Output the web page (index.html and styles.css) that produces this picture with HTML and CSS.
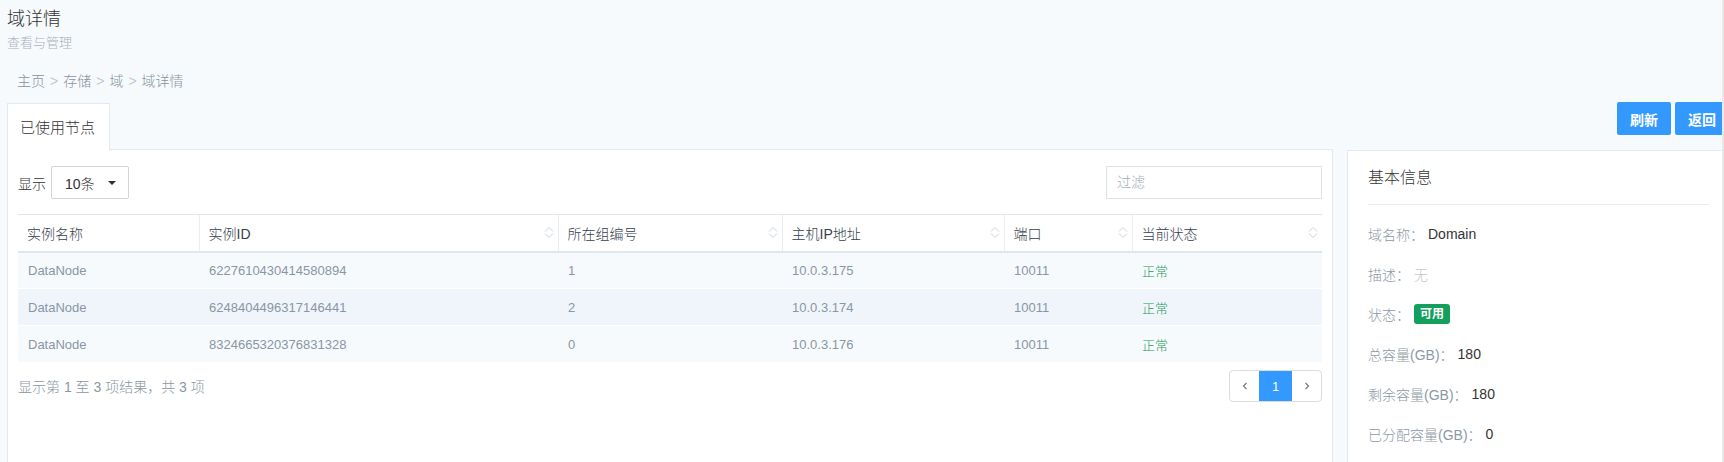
FILE: index.html
```html
<!DOCTYPE html>
<html lang="zh-CN">
<head>
<meta charset="utf-8">
<title>域详情</title>
<link rel="stylesheet" href="styles.css">
</head>
<body>
<div class="viewport">
  <div class="page">
    <header class="page-head">
      <h1 class="title">域详情</h1>
      <div class="subtitle">查看与管理</div>
    </header>
    <nav class="crumbs">
      <span>主页</span><span class="sep">&gt;</span><span>存储</span><span class="sep">&gt;</span><span>域</span><span class="sep">&gt;</span><span>域详情</span>
    </nav>
    <div class="main">
      <section class="left">
        <div class="tabbar">
          <div class="tab">已使用节点</div>
          <div class="tab-fill"></div>
        </div>
        <div class="panel">
          <div class="toolbar">
            <div class="length">
              <span class="length-label">显示</span>
              <div class="select"><span>10条</span><span class="caret"></span></div>
            </div>
            <div class="filter">过滤</div>
          </div>
          <table class="grid">
            <colgroup>
              <col class="c1"><col class="c2"><col class="c3"><col class="c4"><col class="c5"><col class="c6">
            </colgroup>
            <thead>
              <tr>
                <th>实例名称</th>
                <th><div class="th-in"><span>实例ID</span><svg class="sort" viewBox="0 0 10 13" width="10" height="13"><polyline points="1,5.5 5,1.5 9,5.5"/><polyline points="1,7.5 5,11.5 9,7.5"/></svg></div></th>
                <th><div class="th-in"><span>所在组编号</span><svg class="sort" viewBox="0 0 10 13" width="10" height="13"><polyline points="1,5.5 5,1.5 9,5.5"/><polyline points="1,7.5 5,11.5 9,7.5"/></svg></div></th>
                <th><div class="th-in"><span>主机IP地址</span><svg class="sort" viewBox="0 0 10 13" width="10" height="13"><polyline points="1,5.5 5,1.5 9,5.5"/><polyline points="1,7.5 5,11.5 9,7.5"/></svg></div></th>
                <th><div class="th-in"><span>端口</span><svg class="sort" viewBox="0 0 10 13" width="10" height="13"><polyline points="1,5.5 5,1.5 9,5.5"/><polyline points="1,7.5 5,11.5 9,7.5"/></svg></div></th>
                <th><div class="th-in"><span>当前状态</span><svg class="sort" viewBox="0 0 10 13" width="10" height="13"><polyline points="1,5.5 5,1.5 9,5.5"/><polyline points="1,7.5 5,11.5 9,7.5"/></svg></div></th>
              </tr>
            </thead>
            <tbody>
              <tr class="odd">
                <td>DataNode</td><td>6227610430414580894</td><td>1</td><td>10.0.3.175</td><td>10011</td><td class="ok">正常</td>
              </tr>
              <tr class="even">
                <td>DataNode</td><td>6248404496317146441</td><td>2</td><td>10.0.3.174</td><td>10011</td><td class="ok">正常</td>
              </tr>
              <tr class="odd">
                <td>DataNode</td><td>8324665320376831328</td><td>0</td><td>10.0.3.176</td><td>10011</td><td class="ok">正常</td>
              </tr>
            </tbody>
          </table>
          <div class="table-foot">
            <div class="info-text">显示第 1 至 3 项结果，共 3 项</div>
            <div class="pager">
              <span class="pg pg-arrow"><svg viewBox="0 0 6 8" width="6" height="8"><polyline points="4.5,0.8 1.5,4 4.5,7.2"/></svg></span>
              <span class="pg pg-active">1</span>
              <span class="pg pg-arrow"><svg viewBox="0 0 6 8" width="6" height="8"><polyline points="1.5,0.8 4.5,4 1.5,7.2"/></svg></span>
            </div>
          </div>
        </div>
      </section>
      <aside class="right">
        <div class="actions">
          <button class="btn">刷新</button>
          <button class="btn">返回</button>
        </div>
        <div class="card">
          <div class="card-title">基本信息</div>
          <dl class="props">
            <div class="prop"><dt>域名称：</dt><dd>Domain</dd></div>
            <div class="prop"><dt>描述：</dt><dd class="muted">无</dd></div>
            <div class="prop"><dt>状态：</dt><dd><span class="badge">可用</span></dd></div>
            <div class="prop"><dt>总容量(GB)：</dt><dd>180</dd></div>
            <div class="prop"><dt>剩余容量(GB)：</dt><dd>180</dd></div>
            <div class="prop"><dt>已分配容量(GB)：</dt><dd>0</dd></div>
          </dl>
        </div>
      </aside>
    </div>
  </div>
  <div class="edge"></div>
</div>
</body>
</html>
```
FILE: styles.css
```css
* { box-sizing: border-box; }
html, body {
  margin: 0;
  padding: 0;
  height: 462px;
  overflow: hidden;
  background: #f7fafd;
}
body {
  font-family: "Liberation Sans", Arial, "Noto Sans CJK SC", sans-serif;
  font-size: 14px;
  font-weight: 300;
  color: #333;
}
.viewport {
  display: flex;
  width: 1724px;
  height: 462px;
  overflow: hidden;
}
.page {
  width: 1722px;
  flex: none;
  overflow: hidden;
  padding: 8px 0 0 7px;
}
.edge {
  width: 2px;
  flex: none;
  background: #e9e9e9;
}
.title {
  margin: 0;
  font-size: 18px;
  font-weight: 300;
  line-height: 22px;
  color: #333;
}
.subtitle {
  font-size: 13px;
  line-height: 26px;
  color: #a9b2bc;
}
.crumbs {
  margin-top: 15px;
  padding-left: 10px;
  font-size: 14px;
  line-height: 20px;
  color: #8892a0;
}
.crumbs .sep {
  padding: 0 5px;
  color: #c3c8cf;
}
.main {
  display: grid;
  grid-template-columns: 1326px 382px;
  column-gap: 14px;
  margin-top: 12px;
}
.tabbar {
  display: flex;
  height: 47px;
}
.tab {
  width: 103px;
  border: 1px solid #e3e9f0;
  border-bottom: none;
  background: #fff;
  padding: 14px 0 0 12px;
  font-size: 15px;
  line-height: 20px;
  color: #333;
}
.tab-fill {
  flex: 1;
  border-bottom: 1px solid #e3e9f0;
}
.panel {
  background: #fff;
  border: 1px solid #e3e9f0;
  border-top: none;
  padding: 16px 10px 0 10px;
  height: 330px;
}
.toolbar {
  display: flex;
  justify-content: space-between;
  align-items: center;
  height: 33px;
}
.length {
  display: flex;
  align-items: center;
}
.length-label {
  font-size: 14px;
  color: #333;
  margin-right: 5px;
}
.select {
  width: 78px;
  height: 33px;
  border: 1px solid #cfd4da;
  border-radius: 2px;
  display: flex;
  align-items: center;
  justify-content: space-between;
  padding: 0 12px 0 13px;
  font-size: 14px;
  color: #333;
}
.caret {
  width: 0;
  height: 0;
  border-left: 4px solid transparent;
  border-right: 4px solid transparent;
  border-top: 4px solid #333;
}
.filter {
  width: 216px;
  height: 33px;
  border: 1px solid #dde3ea;
  padding-left: 10px;
  line-height: 31px;
  font-size: 14px;
  color: #a8aeb5;
}
.grid {
  width: 100%;
  margin-top: 15px;
  border-collapse: collapse;
  table-layout: fixed;
  font-size: 13px;
}
.c1 { width: 181px; }
.c2 { width: 359px; }
.c3 { width: 224px; }
.c4 { width: 222px; }
.c5 { width: 128px; }
.grid th {
  height: 37px;
  padding: 0 4px 0 9px;
  text-align: left;
  font-weight: 300;
  font-size: 14px;
  color: #34404c;
  border-top: 1px solid #dfe6ee;
  border-bottom: 2px solid #dfe6ee;
  border-left: 1px solid #e8eef5;
  background: #fff;
}
.grid th:first-child { border-left: none; }
.th-in {
  display: flex;
  align-items: center;
  justify-content: space-between;
}
.sort {
  fill: none;
  stroke: #cdd2d8;
  stroke-width: 1;
}
.grid td {
  height: 37px;
  padding: 0 10px;
  color: #8a96a4;
  border-bottom: 1px solid #fff;
}
.grid tr.odd td { background: #f7fafd; }
.grid tr.even td { background: #f0f5fb; }
.grid td.ok { color: #1a9a5c; }
.table-foot {
  display: flex;
  justify-content: space-between;
  align-items: center;
  margin-top: 7px;
}
.info-text {
  font-size: 14px;
  color: #8b96a3;
}
.pager {
  display: flex;
  height: 32px;
  border: 1px solid #dcdcdc;
  border-radius: 4px;
  overflow: hidden;
}
.pg {
  display: flex;
  align-items: center;
  justify-content: center;
  height: 100%;
  font-size: 13px;
}
.pg-arrow {
  width: 29px;
}
.pg-arrow svg {
  fill: none;
  stroke: #6b7480;
  stroke-width: 1.2;
}
.pg-active {
  width: 33px;
  background: #3399ff;
  color: #fff;
}
.actions {
  display: flex;
  justify-content: flex-end;
  gap: 4px;
  height: 47px;
  margin-top: -1px;
}
.btn {
  width: 54px;
  height: 33px;
  border: none;
  border-radius: 2px;
  background: #3399ff;
  color: #fff;
  font-family: inherit;
  font-size: 14px;
  font-weight: bold;
  padding: 0;
}
.card {
  background: #fff;
  border: 1px solid #e3e9f0;
  border-right: none;
  padding: 16px 20px 0 20px;
  height: 330px;
  margin-top: 1px;
}
.card-title {
  font-size: 16px;
  line-height: 22px;
  color: #333;
  padding-bottom: 15px;
  border-bottom: 1px solid #e6ecf2;
}
.props {
  margin: 9px 0 0 0;
}
.prop {
  display: flex;
  align-items: center;
  height: 40px;
  font-size: 14px;
}
.prop dt {
  color: #8c98a5;
  margin-right: 4px;
}
.prop dd {
  margin: 0;
  color: #333;
}
.prop dd.muted { color: #c3c8ce; }
.badge {
  display: inline-block;
  width: 36px;
  height: 20px;
  line-height: 20px;
  text-align: center;
  border-radius: 3px;
  background: #14a05c;
  color: #fff;
  font-size: 12px;
  font-weight: bold;
}
```
